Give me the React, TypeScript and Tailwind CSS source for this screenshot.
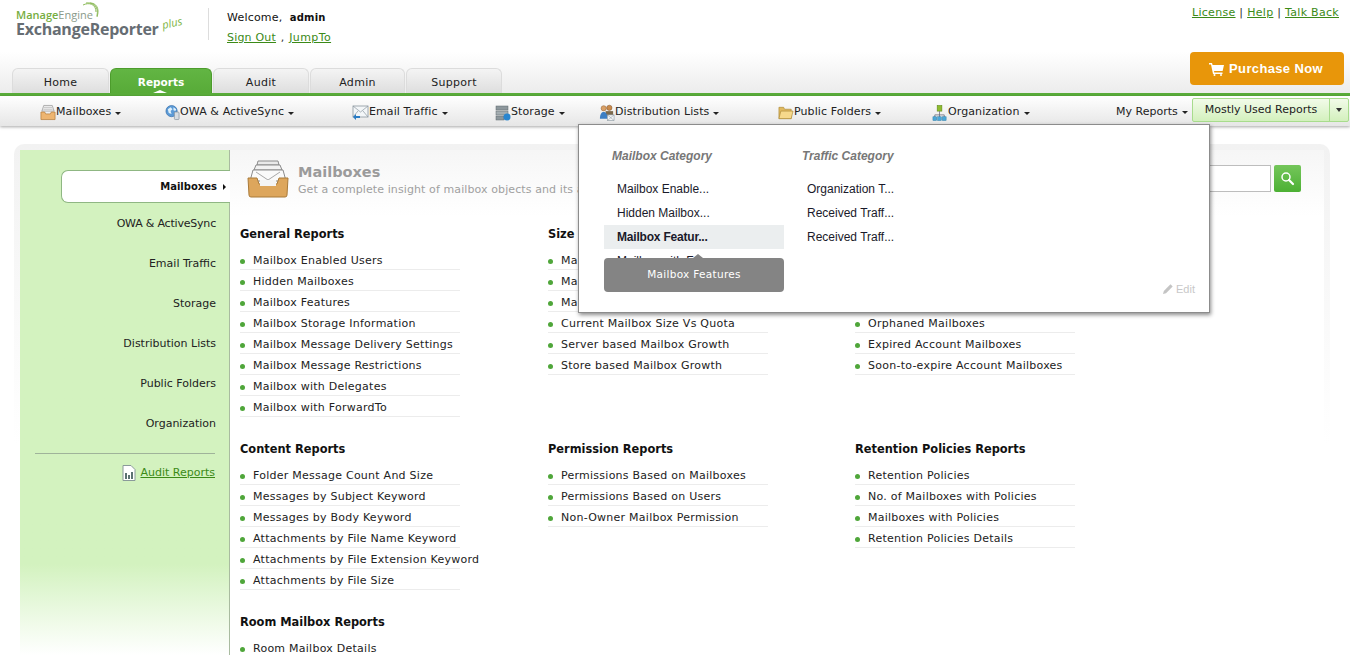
const verdana = "font-['DejaVu_Sans',Verdana,sans-serif]";

const tabs = [
  { label: "Home", w: "w-[97px]" },
  { label: "Reports", w: "w-[102px]", active: true },
  { label: "Audit", w: "w-[96px]" },
  { label: "Admin", w: "w-[95px]" },
  { label: "Support", w: "w-[96px]" },
];

const TrayIcon = () => (
  <svg width="16" height="17" viewBox="0 0 17 17" className="shrink-0">
    <path d="M4 1h9l2 6H2z" fill="#f4f4f4" stroke="#999" strokeWidth="0.8" />
    <path d="M4 3h9M3.500 5h10" stroke="#aaa" strokeWidth="0.7" />
    <path d="M1 8h4l1 2h5l1-2h4v8H1z" fill="#eeb570" stroke="#b9803d" strokeWidth="0.8" />
  </svg>
);
const GlobeIcon = () => (
  <svg width="15" height="17" viewBox="0 0 16 17" className="shrink-0">
    <circle cx="7" cy="7" r="6" fill="#5b9ad6" stroke="#2f6aa8" strokeWidth="0.7" />
    <path d="M3 5l3-2 2 2-2 2 1 3-3-1zM9 3l3 2-1 2-2-1z" fill="#dff0fb" />
    <rect x="10" y="8" width="5" height="8" rx="1" fill="#d7dde2" stroke="#7d8a96" strokeWidth="0.7" />
  </svg>
);
const MailArrowIcon = () => (
  <svg width="17" height="17" viewBox="0 0 17 17" className="shrink-0">
    <rect x="1" y="2" width="15" height="11" fill="#f3f6f8" stroke="#8b979f" strokeWidth="0.8" />
    <path d="M1 2l7.500 6L16 2M1 13l5-6M16 13l-5-6" fill="none" stroke="#8b979f" strokeWidth="0.7" />
    <path d="M1 13l3-3v2h4v2H4v2z" fill="#2a7cc4" />
  </svg>
);
const ServerIcon = () => (
  <svg width="16" height="16" viewBox="0 0 16 16" className="shrink-0">
    <rect x="1" y="1" width="12" height="4" fill="#8d979c" stroke="#5e686d" strokeWidth="0.5" />
    <rect x="1" y="6" width="12" height="4" fill="#a4adb1" stroke="#5e686d" strokeWidth="0.5" />
    <rect x="1" y="11" width="8" height="4" fill="#8d979c" stroke="#5e686d" strokeWidth="0.5" />
    <circle cx="12" cy="12" r="3.500" fill="#2a86cf" />
  </svg>
);
const PeopleIcon = () => (
  <svg width="16" height="18" viewBox="0 0 17 18" className="shrink-0">
    <circle cx="5" cy="4" r="2.800" fill="#d9a066" stroke="#8a5a2c" strokeWidth="0.5" />
    <circle cx="11" cy="3.500" r="2.800" fill="#c98b4c" stroke="#7a4c22" strokeWidth="0.5" />
    <path d="M7 7h8v5H7z" fill="#7c6a4d" />
    <path d="M1 15c0-5 2-7 4-7s4 2 4 7z" fill="#3d7fc4" />
    <rect x="9" y="11" width="7" height="6" fill="#f2f4f6" stroke="#84919b" strokeWidth="0.6" />
    <path d="M9 11l7 6M16 11l-7 6" stroke="#84919b" strokeWidth="0.5" />
  </svg>
);
const FolderIcon = () => (
  <svg width="16" height="15" viewBox="0 0 17 15" className="shrink-0">
    <path d="M1 2h5l1 2h7v10H1z" fill="#e0b95f" stroke="#ad8a35" strokeWidth="0.7" />
    <path d="M3 6h13l-2 8H1z" fill="#f6d98b" stroke="#ad8a35" strokeWidth="0.7" />
  </svg>
);
const OrgIcon = () => (
  <svg width="16" height="18" viewBox="0 0 17 18" className="shrink-0">
    <rect x="5.500" y="1" width="5" height="6" fill="#8fbc2f" stroke="#5f8a16" strokeWidth="0.6" />
    <path d="M8 7v4M3 14v-3h10v3M8 11v3" fill="none" stroke="#667" strokeWidth="0.8" />
    <rect x="1" y="13" width="4" height="4" fill="#4aa7d8" stroke="#2b7aa5" strokeWidth="0.5" />
    <rect x="6" y="13" width="4" height="4" fill="#4aa7d8" stroke="#2b7aa5" strokeWidth="0.5" />
    <rect x="11" y="13" width="4" height="4" fill="#4aa7d8" stroke="#2b7aa5" strokeWidth="0.5" />
  </svg>
);
const CartIcon = () => (
  <svg width="15" height="14" viewBox="0 0 15 14" className="shrink-0" fill="#fff">
    <path d="M0 1h3l.6 2H15l-1.400 6H5l.3 1.400h8.200V12H4L2 2.600H0z" />
    <circle cx="5.500" cy="13" r="1" />
    <circle cx="12" cy="13" r="1" />
  </svg>
);
const BigTrayIcon = () => (
  <svg width="42" height="38" viewBox="0 0 42 38" className="shrink-0">
    <path d="M11 1h20l1 4H10z" fill="#e9e9e9" stroke="#8b8b8b" />
    <path d="M9 5h24l2 5H7z" fill="#f2f2f2" stroke="#8b8b8b" />
    <path d="M6 10h30l3 11H3z" fill="#fafafa" stroke="#8b8b8b" />
    <path d="M9 12l12 8 12-8" fill="none" stroke="#a8a8a8" />
    <path d="M1 18h9l2 6h18l2-6h9l-1 17q0 2-2 2H4q-2 0-2-2z" fill="#dda65c" stroke="#a97a39" />
    <rect x="13" y="20" width="16" height="6" fill="#f4f4f4" />
  </svg>
);

const navItems = [
  { label: "Mailboxes", icon: <TrayIcon />, w: "w-[125px]", track: "" },
  { label: "OWA & ActiveSync", icon: <GlobeIcon />, w: "w-[187px]", track: "tracking-[-0.4px]" },
  { label: "Email Traffic", icon: <MailArrowIcon />, w: "w-[143px]", track: "" },
  { label: "Storage", icon: <ServerIcon />, w: "w-[104px]", track: "" },
  { label: "Distribution Lists", icon: <PeopleIcon />, w: "w-[179px]", track: "" },
  { label: "Public Folders", icon: <FolderIcon />, w: "w-[154px]", track: "" },
  { label: "Organization", icon: <OrgIcon />, w: "w-[170px]", track: "" },
];

const sideItems = ["OWA & ActiveSync", "Email Traffic", "Storage", "Distribution Lists", "Public Folders", "Organization"];

const sections = [
  {
    title: "General Reports",
    items: ["Mailbox Enabled Users", "Hidden Mailboxes", "Mailbox Features", "Mailbox Storage Information", "Mailbox Message Delivery Settings", "Mailbox Message Restrictions", "Mailbox with Delegates", "Mailbox with ForwardTo"],
  },
  {
    title: "Size Reports",
    items: ["Mailbox Size", "Mailbox Size Growth", "Mailbox Size Trend", "Current Mailbox Size Vs Quota", "Server based Mailbox Growth", "Store based Mailbox Growth"],
  },
  {
    title: "Account Reports",
    items: ["Inactive Mailboxes", "Disabled Mailboxes", "Deleted Mailboxes", "Orphaned Mailboxes", "Expired Account Mailboxes", "Soon-to-expire Account Mailboxes"],
  },
  {
    title: "Content Reports",
    items: ["Folder Message Count And Size", "Messages by Subject Keyword", "Messages by Body Keyword", "Attachments by File Name Keyword", "Attachments by File Extension Keyword", "Attachments by File Size"],
  },
  {
    title: "Permission Reports",
    items: ["Permissions Based on Mailboxes", "Permissions Based on Users", "Non-Owner Mailbox Permission"],
  },
  {
    title: "Retention Policies Reports",
    items: ["Retention Policies", "No. of Mailboxes with Policies", "Mailboxes with Policies", "Retention Policies Details"],
  },
  { title: "Room Mailbox Reports", items: ["Room Mailbox Details"] },
];

const Section = ({ title, items }: { title: string; items: string[] }) => (
  <div>
    <h3 className="h-[16px] text-[11.4px] leading-[16px] font-bold text-[#111]">{title}</h3>
    <ul className="mt-[7px]">
      {items.map((item) => (
        <li key={item} className="flex h-[21px] w-[220px] items-center whitespace-nowrap border-b border-[#ececec] pt-[4px] text-[11px] tracking-[0.25px] text-[#222]">
          <span className="mr-[8px] h-[5px] w-[5px] shrink-0 rounded-full bg-[#4fa63a]" />
          {item}
        </li>
      ))}
    </ul>
  </div>
);

const PopupColumn = ({ title, items, active }: { title: string; items: string[]; active?: string }) => (
  <div className="w-[190px] shrink-0">
    <div className="pl-[8px] text-[12px] leading-[14px] font-bold text-[#777] italic">{title}</div>
    <ul className="mt-[14px] w-[180px]">
      {items.map((item) => (
        <li key={item} className={`h-[24px] pl-[13px] text-[12px] leading-[24px] text-[#1a1a2a] ${item === active ? "bg-[#ebeeef] font-bold tracking-[-0.2px]" : ""}`}>
          {item}
        </li>
      ))}
    </ul>
  </div>
);

export default function App() {
  return (
    <div className={`relative h-[655px] w-[1350px] overflow-hidden bg-white ${verdana} text-[11px] text-[#111]`}>
      {/* Top header */}
      <header className="flex h-[52px] items-start bg-white">
        <div className="relative ml-[16px] w-[192px] pt-[9px] font-['Open_Sans',sans-serif]">
          <svg width="20" height="18" viewBox="0 0 20 18" fill="none" stroke="#8dbb5a" className="absolute left-[66px] top-[2px]">
            <path d="M1 3c6-3 13-1 13 7" strokeWidth="1" />
            <path d="M4 1c7-1 13 3 11 13" strokeWidth="1" />
            <path d="M8 1c6 0 10 5 7 14" strokeWidth="1" />
          </svg>
          <div className="text-[11px] leading-[12px] text-[#8a9a8a]">
            <span className="font-semibold text-[#76ad3f]">Manage</span>Engine
          </div>
          <div className="flex items-start whitespace-nowrap text-[16px] leading-[16px] font-bold tracking-[-0.25px] text-[#666d73]">
            ExchangeReporter
            <span className="relative -top-[6px] ml-[3px] -rotate-12 text-[11px] font-normal italic tracking-normal text-[#7cb342]">plus</span>
          </div>
        </div>
        <div className="mt-[8px] h-[32px] w-px bg-[#ddd]" />
        <div className="ml-[18px] pt-[11px] tracking-[0.2px]">
          <div className="leading-[13px]">
            Welcome,&nbsp; <b className="text-[10px]">admin</b>
          </div>
          <div className="mt-[7px] leading-[13px] text-[#3b8a17]">
            <span className="underline">Sign Out</span> <span className="mx-[1px] text-[#333]">,</span> <span className="underline tracking-[0.4px]">JumpTo</span>
          </div>
        </div>
        <div className="ml-auto flex flex-col items-end pr-[6px]">
          <div className="mr-[5px] mt-[6px] leading-[13px] tracking-[0.3px] text-[#333]">
            <span className="text-[#3b8a17] underline">License</span> | <span className="text-[#3b8a17] underline">Help</span> | <span className="text-[#3b8a17] underline">Talk Back</span>
          </div>
        </div>
      </header>

      {/* Tab strip */}
      <div className="flex h-[41px] items-end bg-gradient-to-b from-white to-[#ececec]">
        <div className="ml-[12px] flex gap-[1px]">
          {tabs.map((t) =>
            t.active ? (
              <div key={t.label} className={`relative ${t.w} flex h-[25px] items-center justify-center rounded-t-[6px] border border-b-0 border-[#4c9c2c] bg-gradient-to-b from-[#62b543] to-[#58ab38] pt-[4px] text-[10.5px] font-bold text-white`}>
                {t.label}
                <span className="absolute bottom-0 left-[42px] h-0 w-0 border-x-[7px] border-b-[3px] border-x-transparent border-b-white" />
              </div>
            ) : (
              <div key={t.label} className={`${t.w} flex h-[25px] items-center justify-center rounded-t-[6px] border border-b-0 border-[#dcdcdc] bg-gradient-to-b from-[#f4f4f4] to-[#dedede] pt-[4px] tracking-[0.3px] text-[#222]`}>
                {t.label}
              </div>
            ),
          )}
        </div>
        <div className="mb-[8px] ml-auto mr-[6px] flex h-[33px] w-[154px] items-center justify-center gap-[5px] rounded-[4px] bg-[#e8960a] pr-[2px] font-['Liberation_Sans',sans-serif] text-[13px] font-bold tracking-[0.35px] text-white">
          <CartIcon />
          Purchase Now
        </div>
      </div>
      <div className="h-[3px] bg-[#5aad3a]" />

      {/* Main nav */}
      <nav className="flex h-[30px] items-center bg-gradient-to-b from-white to-[#e6e6e6] pl-[40px] pt-[3px] shadow-[0_1px_3px_rgba(0,0,0,0.35)]">
        {navItems.map((n) => (
          <div key={n.label} className={`flex ${n.w} shrink-0 items-center text-[#222]`}>
            {n.icon}
            <span className={`whitespace-nowrap tracking-[0.1px] ${n.track}`}>{n.label}</span>
            <span className="ml-[4px] mt-[1px] h-0 w-0 border-x-[3px] border-t-[3px] border-x-transparent border-t-[#222]" />
          </div>
        ))}
        <div className="ml-[14px] flex items-center whitespace-nowrap text-[#222]">
          My Reports
          <span className="ml-[4px] h-0 w-0 border-x-[3px] border-t-[3px] border-x-transparent border-t-[#222]" />
        </div>
        <div className="mb-[5px] ml-[4px] flex h-[24px] w-[157px] shrink-0 items-center rounded-[2px] border border-[#a8dc8d] bg-gradient-to-b from-[#f2fbe9] to-[#d3f0bd] text-[11px] text-[#222]">
          <span className="flex-1 whitespace-nowrap pl-[12px]">Mostly Used Reports</span>
          <span className="flex h-full w-[19px] items-center justify-center border-l border-[#a8dc8d]">
            <span className="h-0 w-0 border-x-[3.500px] border-t-[4px] border-x-transparent border-t-[#333]" />
          </span>
        </div>
      </nav>

      {/* Body card */}
      <main className="ml-[14px] mt-[18px] h-[600px] w-[1316px] rounded-t-[10px] bg-gradient-to-b from-[#f2f2f2] to-white to-[50%] p-[6px] pb-0">
        <div className="flex h-full bg-white">
          <aside className="h-[505px] w-[210px] shrink-0 border-r border-[#a9bba0] bg-gradient-to-b from-[#d3f2bf] from-[82%] to-white pt-[20px] text-right">
            <div className="ml-[41px] mr-[-1px] flex h-[33px] items-center justify-end rounded-l-[7px] border border-r-0 border-[#8fb783] bg-white pr-[4px] text-[10px] font-bold text-[#111]">
              Mailboxes
              <span className="ml-[6px] h-0 w-0 border-y-[3px] border-l-[3px] border-y-transparent border-l-[#111]" />
            </div>
            <div className="mt-[1px]">
              {sideItems.map((s) => (
                <div key={s} className={`flex h-[40px] items-center justify-end pr-[13px] text-[#222] ${s.includes("&") ? "tracking-[-0.2px]" : ""}`}>
                  {s}
                </div>
              ))}
            </div>
            <div className="ml-[15px] mr-[14px] mt-[9px] flex flex-col items-end border-t border-[#9fb39a] pt-[11px]">
              <div className="flex items-center gap-[4px] text-[#3b8a17]">
                <svg width="14" height="16" viewBox="0 0 14 16">
                  <path d="M1 .5h8l4 4v11H1z" fill="#fff" stroke="#8a9a9a" />
                  <path d="M3 8h2v6H3zM6 10h2v4H6zM9 7h2v7H9z" fill="#5c7272" />
                </svg>
                <span className="underline">Audit Reports</span>
              </div>
            </div>
          </aside>

          <section className="flex min-w-0 flex-1 flex-col">
            <div className="flex h-[66px] items-start bg-gradient-to-b from-[#f6f6f6] to-white pl-[17px] pt-[10px]">
              <BigTrayIcon />
              <div className="ml-[9px]">
                <div className="mt-[4px] text-[14.5px] leading-[17px] font-bold text-[#9b9b9b]">Mailboxes</div>
                <div className="mt-[2px] whitespace-nowrap text-[11px] leading-[14px] tracking-[0.1px] text-[#a0a0a0]">Get a complete insight of mailbox objects and its attributes</div>
              </div>
              <div className="ml-auto mr-[23px] mt-[5px] flex gap-[3px]">
                <div className="h-[27px] w-[300px] border border-[#bdbdbd] bg-white" />
                <div className="flex h-[27px] w-[27px] items-center justify-center rounded-[2px] bg-gradient-to-b from-[#74c65a] to-[#4cb033]">
                  <svg width="15" height="15" viewBox="0 0 15 15" fill="none" stroke="#fff">
                    <circle cx="6" cy="6" r="4" strokeWidth="1.500" />
                    <path d="M9 9l4 4" strokeWidth="2.200" strokeLinecap="round" />
                  </svg>
                </div>
              </div>
            </div>
            <div className="grid grid-cols-[308px_307px_1fr] grid-rows-[215px_173px_auto] pl-[10px] pt-[10px]">
              {sections.map((s) => (
                <Section key={s.title} title={s.title} items={s.items} />
              ))}
            </div>
          </section>
        </div>
      </main>

      {/* Open dropdown */}
      <div className="absolute left-[578px] top-[124px] flex h-[189px] w-[632px] border border-[#8c8c8c] bg-white pl-[25px] pt-[24px] font-['Liberation_Sans',sans-serif] shadow-[1px_2px_4px_rgba(0,0,0,0.45)]">
        <PopupColumn title="Mailbox Category" active="Mailbox Featur..." items={["Mailbox Enable...", "Hidden Mailbox...", "Mailbox Featur...", "Mailbox with F..."]} />
        <PopupColumn title="Traffic Category" items={["Organization T...", "Received Traff...", "Received Traff..."]} />
        <div className="absolute left-[25px] top-[133px] w-[180px]">
          <span className="absolute -top-[4px] left-[89px] h-0 w-0 border-x-[5px] border-b-[4px] border-x-transparent border-b-[#848484]" />
          <div className={`flex h-[34px] items-center justify-center rounded-[4px] bg-[#848484] ${verdana} text-[10.5px] tracking-[0.3px] text-white`}>Mailbox Features</div>
        </div>
        <div className="absolute bottom-[15px] right-[14px] flex items-center gap-[2px] text-[11px] text-[#c8c8c8]">
          <svg width="12" height="12" viewBox="0 0 12 12" fill="#c4c4c4">
            <path d="M1 11l.8-3L8.500 1.300l2.200 2.200L4 10.200z" />
          </svg>
          Edit
        </div>
      </div>
    </div>
  );
}
